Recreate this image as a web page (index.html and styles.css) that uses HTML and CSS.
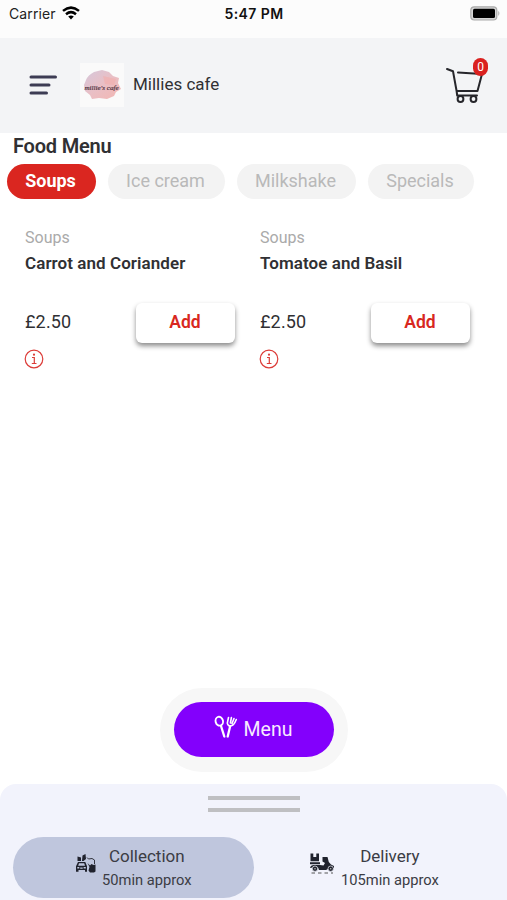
FILE: index.html
```html
<!DOCTYPE html>
<html lang="en">
<head>
<meta charset="utf-8">
<title>Millies cafe</title>
<link rel="stylesheet" href="styles.css">
</head>
<body>
<div class="status">
  <div class="carrier"><span>Carrier</span>
    <svg width="18" height="14" viewBox="0 0 18 14" fill="none" stroke="#000" stroke-width="2.5"><path d="M1 4.9Q9-1.700 17 4.900M4 8.200Q9 4.100 14 8.200"/><path d="M9 13.400 6.200 10.600Q9 8.400 11.800 10.600Z" fill="#000" stroke="none"/></svg>
  </div>
  <div class="clock">5:47 PM</div>
  <div class="battery"><svg width="31" height="15" viewBox="0 0 31 15"><rect x=".8" y=".8" width="26" height="13.2" rx="3.5" fill="#d6d6d6" stroke="#aaa" stroke-width="1.2"/><rect x="3" y="2.800" width="22" height="9.200" rx="1.500" fill="#000"/><path d="M28.300 4.800q2.200 2.600 0 5.200z" fill="#aaa"/></svg></div>
</div>
<header class="header">
  <svg class="burger" width="29" height="22" viewBox="0 0 29 22" fill="none" stroke="#3d3c54" stroke-width="3" stroke-linecap="round"><path d="M2 3h24.500M2 11h18M2 19h15.500"/></svg>
  <div class="logo">
    <svg width="44" height="44" viewBox="0 0 44 44">
      <defs><linearGradient id="wash" x1="0" y1="0" x2="1" y2="1"><stop offset="0" stop-color="#d5c8dc"/><stop offset=".5" stop-color="#e9bfc5"/><stop offset="1" stop-color="#f3b6b2"/></linearGradient></defs>
      <path d="M6 17Q8 12 14 9L22 7 29 9 33 13 39 15 38 20 41 26 36 29 34 33 27 36 19 35 12 36 10 32 5 28 4 22Z" fill="url(#wash)"/>
      <path d="M23 13 36 16 34 22 25 21Z" fill="#f2adab" opacity=".6"/>
      <text x="4.500" y="26.500" class="logo-text" textLength="34">millie's cafe</text>
    </svg>
  </div>
  <div class="name">Millies cafe</div>
  <div class="cart">
    <svg width="38" height="38" viewBox="0 0 38 38" fill="none" stroke="#26262b" stroke-width="2" stroke-linecap="round" stroke-linejoin="round"><path d="M2 3 8 5.200 11.600 25H32.500L37 8 13 6.500M11.600 25 12.200 29.500H32"/><circle cx="15.500" cy="33" r="2.900"/><circle cx="28.500" cy="33" r="2.900"/></svg>
    <span class="badge">0</span>
  </div>
</header>
<main class="content">
  <h1 class="title">Food Menu</h1>
  <nav class="tabs">
    <div class="tab tab-soups">Soups</div>
    <div class="tab tab-ice">Ice cream</div>
    <div class="tab tab-milk">Milkshake</div>
    <div class="tab tab-spec">Specials</div>
  </nav>
  <section class="items">
    <article class="item">
      <div class="category">Soups</div>
      <h2 class="dish">Carrot and Coriander</h2>
      <div class="buy"><span class="price">£2.50</span><button class="add">Add</button></div>
      <svg class="info" width="20" height="20" viewBox="0 0 20 20" fill="none" stroke="#dc3c38" stroke-width="1.200"><circle cx="10" cy="10" r="8.800"/><path d="M8 8.500h2.300v6M7.800 14.500h4.700"/><circle cx="10" cy="5.700" r="1.100" fill="#dc3c38" stroke="none"/></svg>
    </article>
    <article class="item">
      <div class="category">Soups</div>
      <h2 class="dish">Tomatoe and Basil</h2>
      <div class="buy"><span class="price">£2.50</span><button class="add">Add</button></div>
      <svg class="info" width="20" height="20" viewBox="0 0 20 20" fill="none" stroke="#dc3c38" stroke-width="1.200"><circle cx="10" cy="10" r="8.800"/><path d="M8 8.500h2.300v6M7.800 14.500h4.700"/><circle cx="10" cy="5.700" r="1.100" fill="#dc3c38" stroke="none"/></svg>
    </article>
  </section>
</main>
<div class="menu-halo"><button class="menu">
  <svg width="24" height="24" viewBox="0 0 24 24" fill="none" stroke="#fff" stroke-linecap="round" stroke-linejoin="round"><ellipse cx="5.300" cy="6.200" rx="3.700" ry="4.500" transform="rotate(-15 5.300 6.200)" stroke-width="1.900"/><path d="M7 11 10.300 21.500" stroke-width="2.300"/><path d="M14.500 2.500 13.300 8.200Q14 11.500 17.200 10.800 20 10.300 22.300 4.500M17.400 2.500 16.400 8M20 3.500 18 8.500" stroke-width="1.600"/><path d="M16.200 11 13.700 21.500" stroke-width="2.300"/></svg>
  <span>Menu</span></button></div>
<footer class="sheet">
  <div class="handle"></div>
  <div class="modes">
    <div class="mode mode-on">
      <svg width="22" height="20" viewBox="0 0 22 20" fill="#20222d"><path d="M2.500 2.500 6 3.500V7H2.500ZM7.500 1.500 10.500 0 11 5 8.500 7H7Z"/><path fill-rule="evenodd" d="M3 8H10.300L12 12.200V17.800H10V16H3.500V17.800H1V12.200ZM4 9.300 3.200 11.800H10L9.200 9.300ZM2.300 13V14.600H4.300V13ZM8.600 13V14.600H10.800V13ZM5.200 13.500V14.700H7.700V13.500Z"/><path d="M12 3.500 13.500 5 17 4.500 19.500 6V10" fill="none" stroke="#33353f" stroke-width="1"/><path d="M12.500 9 15 11.500 16.500 10 18.500 11 20.500 10.500V17.500L19 18.500H15L13.500 16.500 14.500 13Z"/></svg>
      <div class="mode-text"><span class="mode-name">Collection</span><span class="mode-time">50min approx</span></div>
    </div>
    <div class="mode mode-off">
      <svg width="26" height="22" viewBox="0 0 26 22" fill="#20222d"><path d="M1.500.5H4.300V4H7.300V.5H10V8.300H1.500Z"/><path d="M1 9.300H11V11.300H1ZM1 15Q1.500 12 5 12H11L14.500 12.500 16 10 13.500 8.500V4L18.500 4 19.800 9 22 11.500 25 13V15H21L17 17H10L9 14.500H4Z"/><circle cx="6" cy="15.700" r="2.700" stroke="#f2f3fc" stroke-width=".7"/><circle cx="21.700" cy="15.700" r="2.700" stroke="#f2f3fc" stroke-width=".7"/><circle cx="6" cy="15.700" r=".8" fill="#bbb"/><circle cx="21.700" cy="15.700" r=".8" fill="#bbb"/><path d="M2.500 20H24" stroke="#555" stroke-width="1" stroke-dasharray="3.500 3"/></svg>
      <div class="mode-text"><span class="mode-name">Delivery</span><span class="mode-time">105min approx</span></div>
    </div>
  </div>
</footer>
</body>
</html>
```
FILE: styles.css
```css
* { box-sizing: border-box; }
body {
  margin: 0;
  width: 507px;
  height: 900px;
  overflow: hidden;
  display: flex;
  flex-direction: column;
  background: #fff;
  font-family: Roboto, "Liberation Sans", sans-serif;
  color: #303033;
}
svg { display: block; flex: none; }
h1, h2 { margin: 0; }
button { border: 0; padding: 0; font-family: inherit; }

.status {
  height: 38px;
  flex: none;
  display: grid;
  grid-template-columns: 1fr auto 1fr;
  align-items: start;
  padding: 5px 8px 0 9px;
  background: #fcfcfc;
  font-family: Inter, sans-serif;
  font-size: 14px;
  line-height: 18px;
}
.carrier { display: flex; gap: 6px; color: #222; letter-spacing: .1px; }
.carrier svg { margin-top: 1px; }
.clock { color: #111; font-weight: 600; letter-spacing: .4px; }
.battery { justify-self: end; padding-top: 1px; margin-right: -2px; }

.header {
  height: 95px;
  flex: none;
  display: flex;
  align-items: center;
  padding: 0 24px 1px 29px;
  background: #f3f4f6;
}
.logo { margin-left: 22px; background: #fafafa; }
.logo-text { font: italic 400 7px "Liberation Serif", serif; fill: #4b303d; stroke: #4b303d; stroke-width: .2px; }
.name { margin: 0 0 2px 9px; font-size: 17px; }
.cart { position: relative; margin-left: auto; height: 38px; }
.badge {
  position: absolute;
  left: 28px;
  top: -8px;
  width: 15px;
  height: 18px;
  border-radius: 8px;
  background: #da211f;
  color: #fff;
  font-size: 12px;
  line-height: 18px;
  text-align: center;
}

.content { flex: 1; }
.title { padding: 1px 13px 0; height: 31px; font-size: 20px; line-height: 24px; font-weight: 600; letter-spacing: -.2px; }
.tabs { display: flex; gap: 12px; padding-left: 7px; }
.tab {
  height: 35px;
  border-radius: 18px;
  background: #f3f3f3;
  color: #b9b9b9;
  padding-right: 2px;
  font-size: 18px;
  line-height: 33px;
  text-align: center;
}
.tab-soups { width: 89px; background: #da2620; color: #fff; font-weight: 700; }
.tab-ice { width: 117px; }
.tab-milk { width: 119px; }
.tab-spec { width: 106px; }

.items { display: grid; grid-template-columns: 210px 210px; gap: 25px; padding: 28px 0 0 25px; }
.category { color: #aaa; font-size: 16px; line-height: 22px; }
.dish { margin-top: 3px; font-size: 17px; line-height: 22px; font-weight: 600; letter-spacing: .07px; white-space: nowrap; }
.buy { display: flex; justify-content: space-between; align-items: center; margin-top: 29px; height: 40px; }
.price { padding-bottom: 3px; font-size: 18px; letter-spacing: .15px; }
.add {
  width: 99px;
  height: 40px;
  padding: 0 1px 3px 0;
  border-radius: 6px;
  background: #fff;
  box-shadow: 0 3px 5px rgba(0, 0, 0, .45);
  color: #d82720;
  font-size: 17.5px;
  font-weight: 600;
}
.info { margin: 6px 0 0 -1px; }

.menu-halo {
  align-self: center;
  flex: none;
  width: 188px;
  height: 84px;
  border-radius: 42px;
  margin-bottom: 12px;
  padding: 14px;
  background: #f7f7f7;
}
.menu {
  width: 160px;
  height: 55px;
  padding: 0 1px 1px 0;
  border-radius: 28px;
  background: #8300fc;
  color: #f8eaff;
  display: flex;
  justify-content: center;
  align-items: center;
  gap: 6px;
  font-size: 19.5px;
}
.menu svg { margin-bottom: 5px; }

.sheet { height: 116px; flex: none; padding-top: 12px; border-radius: 16px 16px 0 0; background: #f2f3fc; }
.handle { width: 92px; height: 16px; margin: 0 auto; border: solid #bfbfc2; border-width: 4px 0; }
.modes { display: flex; margin-top: 25px; padding-left: 13px; }
.mode { display: flex; width: 241px; height: 61px; border-radius: 31px; }
.mode-on { background: #bfc6dd; padding-left: 62px; }
.mode-on svg { margin-top: 17px; }
.mode-on .mode-text { margin-left: 5px; }
.mode-off { padding-left: 55px; }
.mode-off svg { margin-top: 16px; }
.mode-off .mode-text { margin-left: 6px; }
.mode-text { display: flex; flex-direction: column; align-items: center; padding-top: 7px; white-space: nowrap; color: #3b3c44; }
.mode-name { font-size: 17px; line-height: 24px; }
.mode-time { font-size: 14.7px; line-height: 25px; }
```
